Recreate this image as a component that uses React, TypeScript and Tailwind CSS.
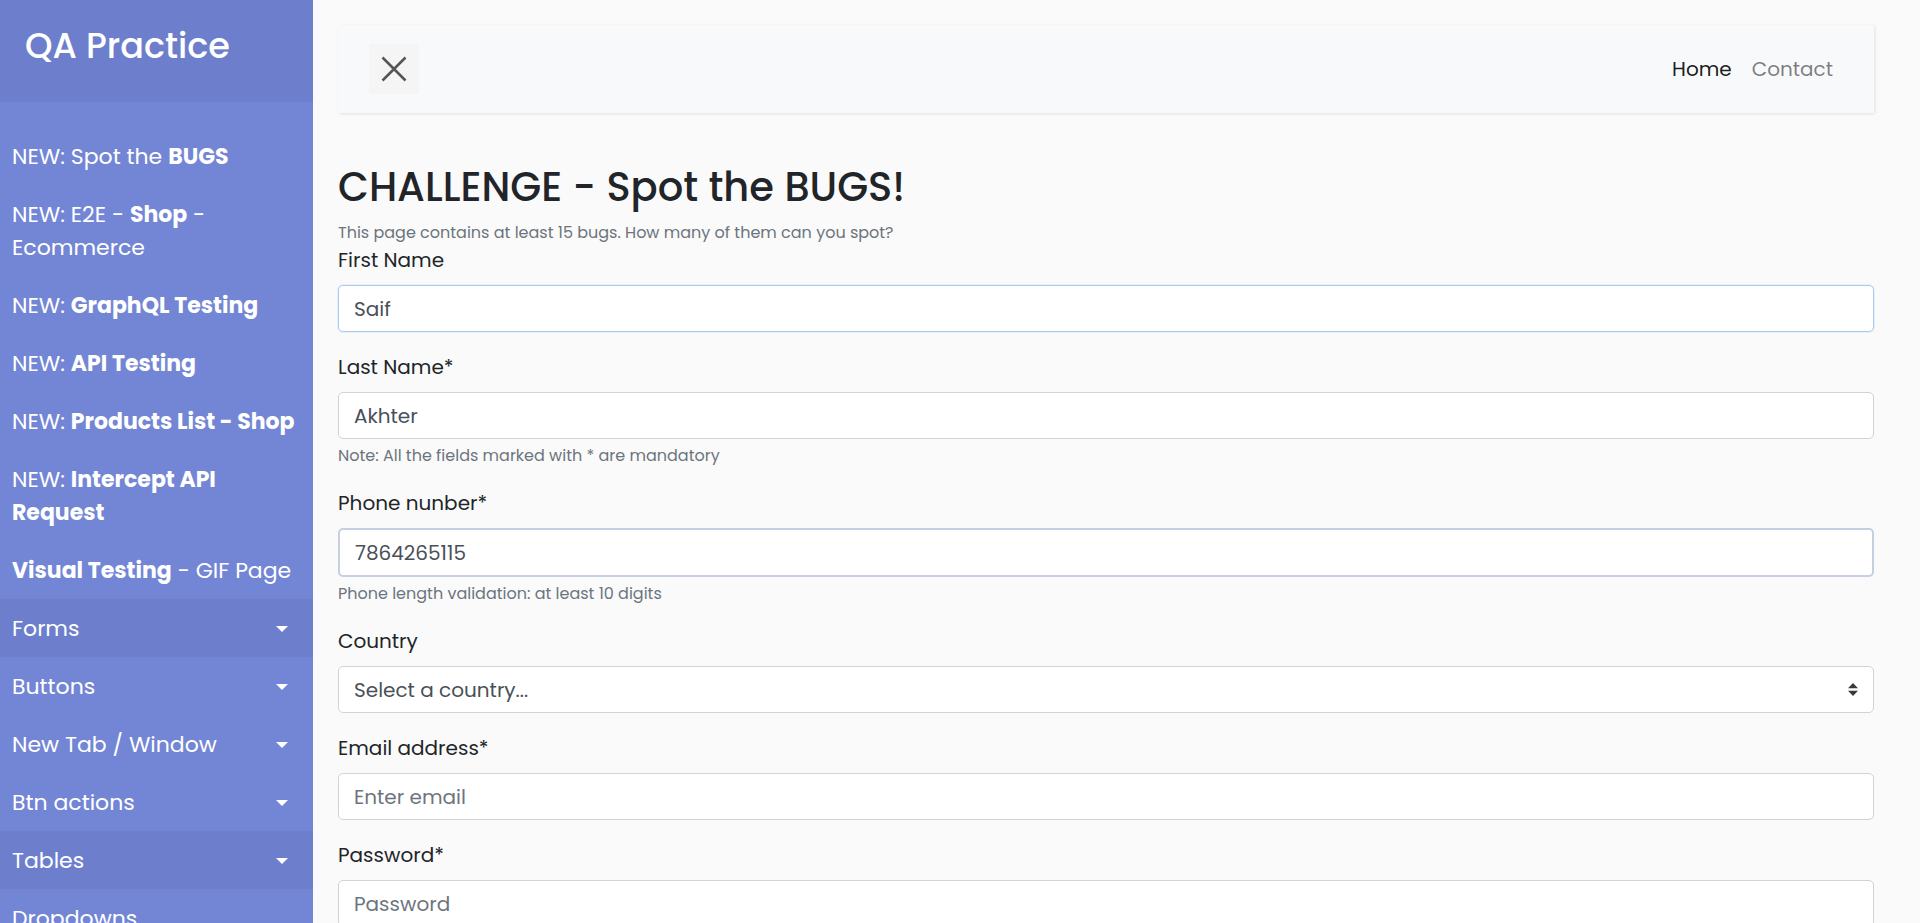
import { useState } from "react";
import type { ReactNode } from "react";

type NavItem = { id: string; label: ReactNode; menu?: boolean; shaded?: boolean };

const navItems: NavItem[] = [
  { id: "bugs", label: <>NEW: Spot the <b>BUGS</b></> },
  { id: "shop", label: <>NEW: E2E - <b>Shop</b> - Ecommerce</> },
  { id: "graphql", label: <>NEW: <b>GraphQL Testing</b></> },
  { id: "api", label: <>NEW: <b>API Testing</b></> },
  { id: "products", label: <>NEW: <b>Products List - Shop</b></> },
  { id: "intercept", label: <>NEW: <b>Intercept API Request</b></> },
  { id: "visual", label: <><b>Visual Testing</b> - GIF Page</> },
  { id: "forms", label: "Forms", menu: true, shaded: true },
  { id: "buttons", label: "Buttons", menu: true },
  { id: "windows", label: "New Tab / Window", menu: true },
  { id: "actions", label: "Btn actions", menu: true },
  { id: "tables", label: "Tables", menu: true, shaded: true },
  { id: "dropdowns", label: "Dropdowns" },
];

function Sidebar() {
  return (
    <nav className="w-[313px] shrink-0 overflow-y-auto bg-[#7386d5] text-white [scrollbar-width:none]">
      <div className="bg-[#6d7fcc] px-[25px] pt-[25px] pb-[35px]">
        <h3 className="text-[35px] leading-[42px] font-medium">QA Practice</h3>
      </div>
      <ul className="pt-[25px] text-[22px] leading-[33px]">
        {navItems.map((item) => (
          <li key={item.id}>
            <a
              href={`#${item.id}`}
              className={`flex items-center justify-between pt-[13px] pb-[12px] pl-3 ${
                item.menu ? "pr-[25px]" : "pr-3"
              } ${item.shaded ? "bg-[#6d7fcc]" : ""}`}
            >
              <span>{item.label}</span>
              {item.menu && (
                <svg width="12" height="6" viewBox="0 0 12 6" fill="currentColor" aria-hidden="true">
                  <path d="M0 0h12L6 6z" />
                </svg>
              )}
            </a>
          </li>
        ))}
      </ul>
    </nav>
  );
}

function Field({ id, label, note, children }: { id: string; label: string; note?: string; children: ReactNode }) {
  return (
    <div className="mb-5">
      <label htmlFor={id} className="mb-[10px] block">
        {label}
      </label>
      {children}
      {note && <small className="mt-1 block text-[16px] leading-[25px] text-[#6c757d]">{note}</small>}
    </div>
  );
}

const control =
  "block w-full rounded-[5px] bg-white px-[15px] text-[#495057] placeholder:text-[#6c757d] placeholder:opacity-100 outline-none";

export default function App() {
  const [first, setFirst] = useState("Saif");
  const [last, setLast] = useState("Akhter");
  const [phone, setPhone] = useState("7864265115");

  return (
    <div className="flex h-screen bg-[#fafafa] font-[Poppins,Inter,sans-serif] text-[20px] leading-[30px] text-[#212529]">
      <Sidebar />
      <main className="min-w-0 flex-1 overflow-y-auto pt-[25px] pr-[46px] pl-[25px] [scrollbar-width:none]">
        <header className="mb-[50px] flex items-center justify-between bg-[#f8f9fb] py-[19px] pr-[41px] pl-[31px] shadow-[1px_1px_3px_rgba(0,0,0,0.1)]">
          <button type="button" aria-label="Toggle sidebar" className="flex size-[50px] items-center justify-center bg-[#f5f5f5]">
            <svg width="26" height="26" viewBox="0 0 26 26" stroke="#555" strokeWidth="2.5" aria-hidden="true">
              <path d="M1.5 1.5l23 23M24.5 1.5l-23 23" />
            </svg>
          </button>
          <div className="flex gap-5">
            <a href="#home" className="text-black/90">Home</a>
            <a href="#contact" className="text-black/50">Contact</a>
          </div>
        </header>

        <h2 className="mb-[9px] text-[40px] leading-[48px] font-medium">CHALLENGE - Spot the BUGS!</h2>
        <small className="block text-[16px] leading-[25px] text-[#6c757d]">
          This page contains at least 15 bugs. How many of them can you spot?
        </small>

        <form>
          <Field id="first" label="First Name">
            <input
              id="first"
              value={first}
              onChange={(e) => setFirst(e.target.value)}
              className={`${control} h-[47px] border border-[#abcbec] shadow-[0_0_0_1px_rgba(0,123,255,0.08)]`}
            />
          </Field>
          <Field id="last" label="Last Name*" note="Note: All the fields marked with * are mandatory">
            <input
              id="last"
              value={last}
              onChange={(e) => setLast(e.target.value)}
              className={`${control} h-[47px] border border-[#ced4da]`}
            />
          </Field>
          <Field id="phone" label="Phone nunber*" note="Phone length validation: at least 10 digits">
            <input
              id="phone"
              value={phone}
              onChange={(e) => setPhone(e.target.value)}
              className={`${control} h-[49px] border-2 border-[#c6cfdf]`}
            />
          </Field>
          <Field id="country" label="Country">
            <div className="relative">
              <select id="country" className={`${control} h-[47px] appearance-none border border-[#ced4da]`}>
                <option>Select a country...</option>
              </select>
              <svg
                className="pointer-events-none absolute inset-y-0 right-4 my-auto"
                width="10"
                height="13"
                viewBox="0 0 4 5"
                preserveAspectRatio="none"
                fill="#343a40"
                aria-hidden="true"
              >
                <path d="M2 0L0 2h4zm0 5L0 3h4z" />
              </svg>
            </div>
          </Field>
          <Field id="email" label="Email address*">
            <input id="email" type="email" placeholder="Enter email" className={`${control} h-[47px] border border-[#ced4da]`} />
          </Field>
          <Field id="password" label="Password*">
            <input id="password" type="password" placeholder="Password" className={`${control} h-[47px] border border-[#ced4da]`} />
          </Field>
        </form>
      </main>
    </div>
  );
}
